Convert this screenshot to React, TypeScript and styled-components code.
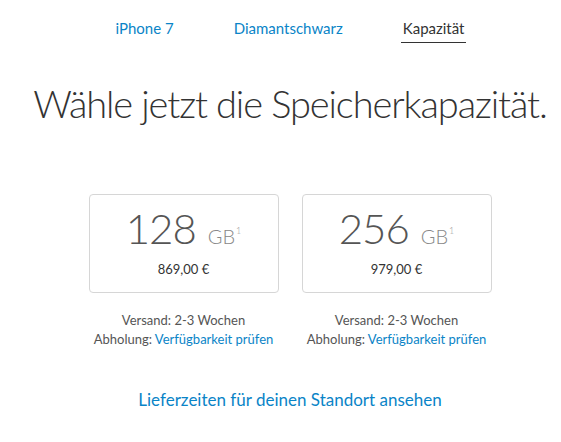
import React from 'react';
import styled, { createGlobalStyle } from 'styled-components';

const GlobalStyle = createGlobalStyle`
  html, body {
    margin: 0;
    padding: 0;
    background: #fff;
  }
  body {
    font-family: Lato, "Open Sans", "Liberation Sans", sans-serif;
    color: #333;
    -webkit-font-smoothing: antialiased;
  }
`;

const S = {
  Page: styled.div`
    display: flex;
    flex-direction: column;
    align-items: center;
    padding-left: 19px;
  `,
  Nav: styled.nav`
    display: flex;
    gap: 56px;
    margin-top: 17px;
    height: 28px;
  `,
  NavItem: styled.a<{ $active?: boolean }>`
    font-size: 15px;
    line-height: 22px;
    text-decoration: none;
    color: ${(p) => (p.$active ? '#333' : '#0a84c7')};
    padding: 0 2px 5px;
    border-bottom: 1px solid ${(p) => (p.$active ? '#333' : 'transparent')};
    height: 20px;
  `,
  Heading: styled.h1`
    margin: 34px 0 0;
    font-size: 38px;
    font-weight: 300;
    line-height: 48px;
    color: #333;
    white-space: nowrap;
    letter-spacing: -1.1px;
  `,
  Options: styled.div`
    display: flex;
    gap: 23px;
    margin-top: 67px;
  `,
  Option: styled.div`
    display: flex;
    flex-direction: column;
    align-items: center;
  `,
  Card: styled.button`
    width: 190px;
    height: 99px;
    box-sizing: border-box;
    border: 1px solid #d6d6d6;
    border-radius: 4px;
    background: #fff;
    display: flex;
    flex-direction: column;
    align-items: center;
    justify-content: center;
    font-family: inherit;
    padding: 0;
    cursor: pointer;
  `,
  Size: styled.div`
    display: flex;
    align-items: baseline;
    color: #555;
    font-weight: 300;
    line-height: 48px;
    margin-top: -6px;
  `,
  Number: styled.span`
    font-size: 42px;
    letter-spacing: -1px;
  `,
  Unit: styled.span`
    font-size: 20px;
    color: #888;
    margin-left: 12px;
  `,
  Sup: styled.span`
    font-size: 9px;
    line-height: 1;
    color: #999;
    align-self: flex-start;
    margin-top: 22px;
    margin-left: 1px;
  `,
  Price: styled.div`
    font-size: 13px;
    color: #333;
    margin-top: 1px;
  `,
  Details: styled.div`
    margin-top: 18px;
    font-size: 13px;
    line-height: 19px;
    color: #555;
    text-align: center;
  `,
  Link: styled.a`
    color: #0a84c7;
    text-decoration: none;
  `,
  Footer: styled.a`
    margin-top: 40px;
    font-size: 17px;
    color: #0a84c7;
    text-decoration: none;
  `,
};

const options = [
  { size: '128', price: '869,00 €' },
  { size: '256', price: '979,00 €' },
];

export default function App() {
  return (
    <>
      <GlobalStyle />
      <S.Page>
        <S.Nav>
          <S.NavItem href="#">iPhone 7</S.NavItem>
          <S.NavItem href="#">Diamantschwarz</S.NavItem>
          <S.NavItem href="#" $active>
            Kapazität
          </S.NavItem>
        </S.Nav>
        <S.Heading>Wähle jetzt die Speicherkapazität.</S.Heading>
        <S.Options>
          {options.map((o) => (
            <S.Option key={o.size}>
              <S.Card>
                <S.Size>
                  <S.Number>{o.size}</S.Number>
                  <S.Unit>GB</S.Unit>
                  <S.Sup>1</S.Sup>
                </S.Size>
                <S.Price>{o.price}</S.Price>
              </S.Card>
              <S.Details>
                Versand: 2-3 Wochen
                <br />
                Abholung: <S.Link href="#">Verfügbarkeit prüfen</S.Link>
              </S.Details>
            </S.Option>
          ))}
        </S.Options>
        <S.Footer href="#">Lieferzeiten für deinen Standort ansehen</S.Footer>
      </S.Page>
    </>
  );
}
